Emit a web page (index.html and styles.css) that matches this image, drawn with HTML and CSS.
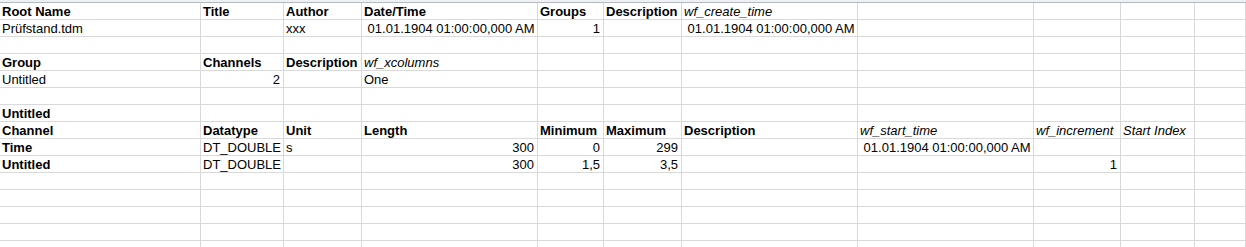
FILE: index.html
```html
<!DOCTYPE html>
<html lang="de">
<head>
<meta charset="utf-8">
<title>Prüfstand.tdm</title>
<link rel="stylesheet" href="styles.css">
</head>
<body>
<div class="sheet">
  <div class="header-strip"></div>

  <div class="row">
    <div class="c b">Root Name</div><div class="c b">Title</div><div class="c b">Author</div><div class="c b">Date/Time</div><div class="c b">Groups</div><div class="c b">Description</div><div class="c i">wf_create_time</div><div class="c"></div><div class="c"></div><div class="c"></div><div class="c"></div>
  </div>
  <div class="row">
    <div class="c">Prüfstand.tdm</div><div class="c"></div><div class="c">xxx</div><div class="c"> 01.01.1904 01:00:00,000 AM</div><div class="c r">1</div><div class="c"></div><div class="c"> 01.01.1904 01:00:00,000 AM</div><div class="c"></div><div class="c"></div><div class="c"></div><div class="c"></div>
  </div>
  <div class="row">
    <div class="c"></div><div class="c"></div><div class="c"></div><div class="c"></div><div class="c"></div><div class="c"></div><div class="c"></div><div class="c"></div><div class="c"></div><div class="c"></div><div class="c"></div>
  </div>
  <div class="row">
    <div class="c b">Group</div><div class="c b">Channels</div><div class="c b">Description</div><div class="c i">wf_xcolumns</div><div class="c"></div><div class="c"></div><div class="c"></div><div class="c"></div><div class="c"></div><div class="c"></div><div class="c"></div>
  </div>
  <div class="row">
    <div class="c">Untitled</div><div class="c r">2</div><div class="c"></div><div class="c">One</div><div class="c"></div><div class="c"></div><div class="c"></div><div class="c"></div><div class="c"></div><div class="c"></div><div class="c"></div>
  </div>
  <div class="row">
    <div class="c"></div><div class="c"></div><div class="c"></div><div class="c"></div><div class="c"></div><div class="c"></div><div class="c"></div><div class="c"></div><div class="c"></div><div class="c"></div><div class="c"></div>
  </div>
  <div class="row">
    <div class="c b">Untitled</div><div class="c"></div><div class="c"></div><div class="c"></div><div class="c"></div><div class="c"></div><div class="c"></div><div class="c"></div><div class="c"></div><div class="c"></div><div class="c"></div>
  </div>
  <div class="row">
    <div class="c b">Channel</div><div class="c b">Datatype</div><div class="c b">Unit</div><div class="c b">Length</div><div class="c b">Minimum</div><div class="c b">Maximum</div><div class="c b">Description</div><div class="c i">wf_start_time</div><div class="c i">wf_increment</div><div class="c i">Start Index</div><div class="c"></div>
  </div>
  <div class="row">
    <div class="c b">Time</div><div class="c">DT_DOUBLE</div><div class="c">s</div><div class="c r">300</div><div class="c r">0</div><div class="c r">299</div><div class="c"></div><div class="c"> 01.01.1904 01:00:00,000 AM</div><div class="c"></div><div class="c"></div><div class="c"></div>
  </div>
  <div class="row">
    <div class="c b">Untitled</div><div class="c">DT_DOUBLE</div><div class="c"></div><div class="c r">300</div><div class="c r">1,5</div><div class="c r">3,5</div><div class="c"></div><div class="c"></div><div class="c r">1</div><div class="c"></div><div class="c"></div>
  </div>
  <div class="row">
    <div class="c"></div><div class="c"></div><div class="c"></div><div class="c"></div><div class="c"></div><div class="c"></div><div class="c"></div><div class="c"></div><div class="c"></div><div class="c"></div><div class="c"></div>
  </div>
  <div class="row">
    <div class="c"></div><div class="c"></div><div class="c"></div><div class="c"></div><div class="c"></div><div class="c"></div><div class="c"></div><div class="c"></div><div class="c"></div><div class="c"></div><div class="c"></div>
  </div>
  <div class="row">
    <div class="c"></div><div class="c"></div><div class="c"></div><div class="c"></div><div class="c"></div><div class="c"></div><div class="c"></div><div class="c"></div><div class="c"></div><div class="c"></div><div class="c"></div>
  </div>
  <div class="row">
    <div class="c"></div><div class="c"></div><div class="c"></div><div class="c"></div><div class="c"></div><div class="c"></div><div class="c"></div><div class="c"></div><div class="c"></div><div class="c"></div><div class="c"></div>
  </div>
  <div class="row">
    <div class="c"></div><div class="c"></div><div class="c"></div><div class="c"></div><div class="c"></div><div class="c"></div><div class="c"></div><div class="c"></div><div class="c"></div><div class="c"></div><div class="c"></div>
  </div>
</div>
</body>
</html>
```

FILE: styles.css
```css
html, body {
  margin: 0;
  padding: 0;
  background: #ffffff;
}

.sheet {
  display: flex;
  flex-direction: column;
  width: 1246px;
  height: 247px;
  overflow: hidden;
  font-family: "Liberation Sans", Arial, sans-serif;
  font-size: 13px;
  color: #000000;
}

.header-strip {
  height: 2px;
  flex: none;
  background: #eef0f3;
  border-bottom: 1px solid #b3bac4;
}

.row {
  display: grid;
  grid-template-columns: 201px 83px 78px 176px 66px 78px 176px 176px 87px 74px 1fr;
  flex: none;
  height: 17px;
}

.c {
  box-sizing: border-box;
  height: 17px;
  border-right: 1px solid #d9d9d9;
  border-bottom: 1px solid #d9d9d9;
  padding: 0 3px 0 2px;
  line-height: 17px;
  white-space: pre;
  overflow: visible;
}

.b {
  font-weight: bold;
}

.i {
  font-style: italic;
}

.r {
  text-align: right;
}
```
